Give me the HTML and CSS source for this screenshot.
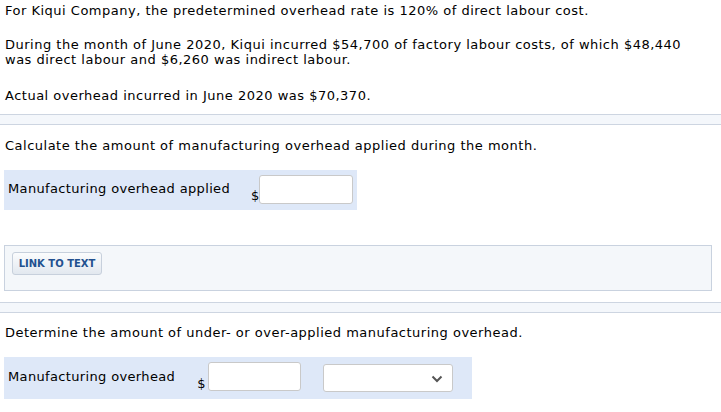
FILE: index.html
```html
<!DOCTYPE html>
<html lang="en">
<head>
<meta charset="utf-8">
<title>Overhead</title>
<link rel="stylesheet" href="styles.css">
</head>
<body>
<div class="intro">
  <p class="p1">For Kiqui Company, the predetermined overhead rate is 120% of direct labour cost.</p>
  <p class="p2">During the month of June 2020, Kiqui incurred $54,700 of factory labour costs, of which $48,440 was direct labour and $6,260 was indirect labour.</p>
  <p class="p3">Actual overhead incurred in June 2020 was $70,370.</p>
</div>
<div class="sep"></div>
<p class="question q1">Calculate the amount of manufacturing overhead applied during the month.</p>
<div class="answer-row row1">
  <span class="label">Manufacturing overhead applied</span>
  <span class="dollar">$</span>
  <input class="amount" type="text">
</div>
<div class="linkbox">
  <button class="link-btn" type="button">LINK TO TEXT</button>
</div>
<div class="sep sep2"></div>
<p class="question q2">Determine the amount of under- or over-applied manufacturing overhead.</p>
<div class="answer-row row2">
  <span class="label">Manufacturing overhead</span>
  <span class="dollar">$</span>
  <input class="amount" type="text">
  <div class="select">
    <svg class="chev" width="12" height="8" viewBox="0 0 12 8"><path d="M1.5 1.5 L6 6 L10.5 1.5" fill="none" stroke="#555" stroke-width="2"/></svg>
  </div>
</div>
</body>
</html>
```

FILE: styles.css
```css
html, body {
  margin: 0;
  padding: 0;
  background: #fff;
}
body {
  font-family: "DejaVu Sans", Verdana, sans-serif;
  font-size: 13px;
  line-height: 15px;
  letter-spacing: 0.5px;
  color: #000;
  width: 721px;
}
p {
  margin: 0;
}
.intro {
  padding: 3px 0 0 5px;
  width: 695px;
}
.p2 {
  margin-top: 19px;
}
.p3 {
  margin-top: 21px;
}
.sep {
  margin-top: 11px;
  height: 9px;
  border-top: 1px solid #cdd5e1;
  border-bottom: 1px solid #cdd5e1;
  background: #f4f7fb;
}
.question {
  margin-top: 13px;
  padding-left: 5px;
}
.q2 {
  margin-top: 12px;
}
.answer-row {
  display: flex;
  align-items: flex-start;
  margin-left: 4px;
  background: #dee8f8;
  padding: 5px 4px 6px 4px;
}
.row1 {
  margin-top: 17px;
  width: 345px;
}
.row2 {
  margin-top: 17px;
  width: 460px;
  padding-bottom: 7px;
}
.label {
  margin-top: 6px;
  padding-right: 21px;
  white-space: nowrap;
  letter-spacing: 0.35px;
}
.row2 .label {
  margin-top: 7px;
  padding-right: 22px;
}
.dollar {
  align-self: flex-end;
  margin-bottom: 1px;
  width: 10px;
  letter-spacing: 0;
}
.row2 .dollar {
  width: 11px;
}
.amount {
  box-sizing: border-box;
  width: 94px;
  height: 29px;
  margin: 0;
  padding: 0 4px;
  border: 1px solid #c9c9c9;
  border-radius: 3px;
  background: #fff;
  font: inherit;
}
.row2 .amount {
  width: 93px;
}
.select {
  box-sizing: border-box;
  margin-left: 22px;
  margin-top: 2px;
  width: 130px;
  height: 28px;
  border: 1px solid #c9c9c9;
  border-radius: 3px;
  background: #fff;
  display: flex;
  align-items: center;
  justify-content: flex-end;
  padding-right: 9px;
}
.chev {
  display: block;
  margin-top: 1px;
}
.linkbox {
  box-sizing: border-box;
  margin: 35px 0 0 4px;
  width: 708px;
  height: 46px;
  border: 1px solid #c9d2df;
  background: #f4f7fa;
  padding: 6px 7px;
}
.link-btn {
  display: block;
  box-sizing: border-box;
  width: 90px;
  height: 23px;
  margin: 0;
  padding: 0;
  border: 1px solid #c7d0dc;
  border-radius: 3px;
  background: linear-gradient(#fbfcfd, #e2e8ef);
  color: #22508f;
  font-family: "DejaVu Sans", Verdana, sans-serif;
  font-weight: bold;
  font-size: 10px;
  line-height: 21px;
  letter-spacing: 0;
  text-align: center;
}
.sep2 {
  margin-top: 11px;
}
```
